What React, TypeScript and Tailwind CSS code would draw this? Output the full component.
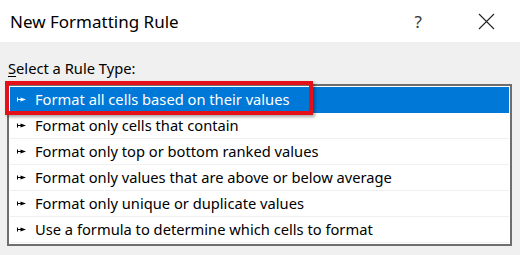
import React from "react";

const items = [
  "Format all cells based on their values",
  "Format only cells that contain",
  "Format only top or bottom ranked values",
  "Format only values that are above or below average",
  "Format only unique or duplicate values",
  "Use a formula to determine which cells to format",
];

function Arrow({ color }: { color: string }) {
  return (
    <svg width="9" height="5" viewBox="0 0 9 5" className="shrink-0">
      <rect x="0" y="0.5" width="1" height="4" fill={color} />
      <rect x="1" y="2" width="3" height="1" fill={color} />
      <polygon points="3.5,0.5 9,2.5 3.5,4.5" fill={color} />
    </svg>
  );
}

export default function App() {
  return (
    <div
      className="w-[520px] h-[255px] flex flex-col bg-[#f0f0f0] overflow-hidden"
      style={{ fontFamily: '"Noto Sans", "Open Sans", sans-serif' }}
    >
      <div className="h-[42px] bg-white flex items-center pl-[10px] shrink-0">
        <span className="text-[17px] text-[#000] leading-none">New Formatting Rule</span>
        <span className="ml-auto text-[17px] text-[#333] leading-none mr-[56px]">?</span>
        <svg width="17" height="17" viewBox="0 0 17 17" className="mr-[25px]">
          <path d="M1 1 L16 16 M16 1 L1 16" stroke="#222" strokeWidth="1.1" />
        </svg>
      </div>
      <div className="flex-1 flex flex-col pt-[16px]">
        <div className="pl-[8px] text-[14.7px] leading-[20px] text-black">
          <span className="underline underline-offset-2">S</span>elect a Rule Type:
        </div>
        <div className="relative mt-[6px] ml-[7px] mr-[8px] border-2 border-[#6e6e6e] bg-white p-[1px]">
          {items.map((t, i) => (
            <div
              key={t}
              className={
                i === 0
                  ? "h-[26px] flex items-center gap-[9px] pl-[7px] bg-[#0078d7] text-white text-[14.7px] border-b border-[#0078d7]"
                  : "h-[26px] flex items-center gap-[9px] pl-[7px] text-black text-[14.7px] border-b border-[#f0f0f0]"
              }
            >
              <Arrow color={i === 0 ? "#ffffff" : "#000000"} />
              <span className="leading-none">{t}</span>
            </div>
          ))}
          <div className="absolute left-[-4px] top-[-5px] w-[308px] h-[34px] border-[4px] border-[#e3101a] shadow-[2px_2px_3px_rgba(0,0,0,0.35)]" />
        </div>
      </div>
    </div>
  );
}
